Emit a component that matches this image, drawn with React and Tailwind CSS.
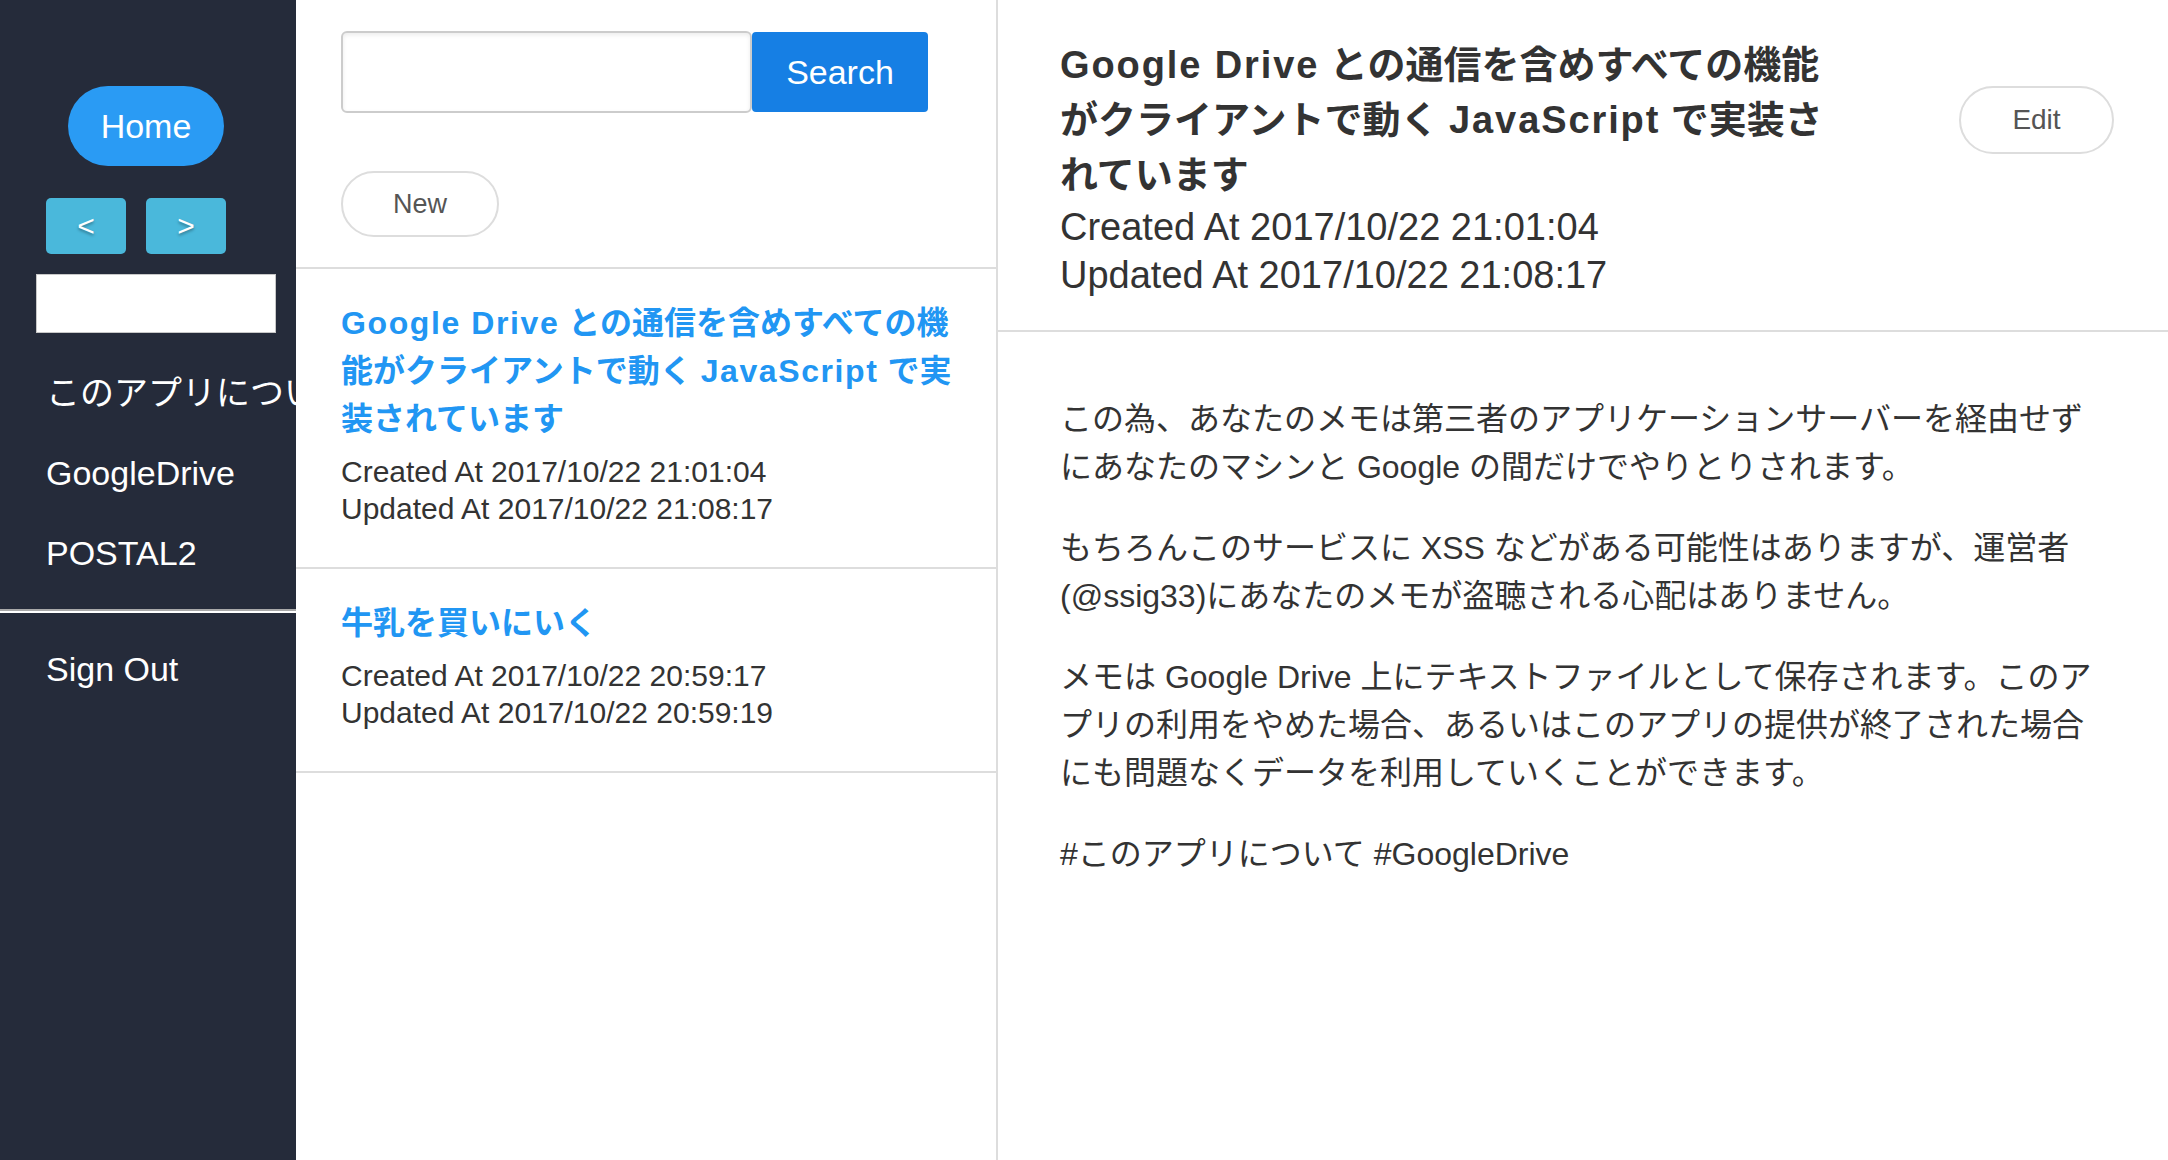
import React from "react";

const FONT = { fontFamily: '"Liberation Sans", "Noto Sans CJK JP", sans-serif' };

function L({ children }) {
  return <span className="tracking-[0.05em]">{children}</span>;
}

function Sidebar() {
  return (
    <aside className="w-[296px] shrink-0 h-full bg-[#252b3a] overflow-hidden flex flex-col text-white">
      <button className="ml-[68px] mt-[86px] w-[156px] h-[80px] rounded-full bg-[#2a9bf4] text-white text-[34px] leading-none">
        Home
      </button>
      <div className="ml-[46px] mt-[32px] flex gap-[20px]">
        <button className="w-[80px] h-[56px] rounded-[5px] bg-[#4ab8db] text-white text-[30px] leading-none [text-shadow:0_2px_3px_rgba(0,0,0,0.35)]">
          &lt;
        </button>
        <button className="w-[80px] h-[56px] rounded-[5px] bg-[#4ab8db] text-white text-[30px] leading-none [text-shadow:0_2px_3px_rgba(0,0,0,0.35)]">
          &gt;
        </button>
      </div>
      <input
        className="ml-[36px] mt-[20px] w-[240px] h-[59px] bg-white border border-[#c8c8c8] outline-none"
        type="text"
      />
      <nav className="mt-[20px] flex flex-col">
        {["このアプリについて", "GoogleDrive", "POSTAL2"].map((t) => (
          <a key={t} className="h-[80px] pl-[46px] flex items-center whitespace-nowrap text-[34px]">
            {t}
          </a>
        ))}
      </nav>
      <div className="mt-[16px] h-[4px] border-t-2 border-[#a9a9a9] border-b-2 border-b-white" />
      <a className="mt-[16px] h-[80px] pl-[46px] flex items-center whitespace-nowrap text-[34px]">Sign Out</a>
    </aside>
  );
}

function ListItem({ lines, created, updated }) {
  return (
    <div className="pl-[45px] pr-[20px] pt-[30px] pb-[40px] border-b-2 border-[#dddddd]">
      <div className="text-[32px] leading-[48px] font-bold text-[#2196f3] whitespace-nowrap">
        {lines.map((l, i) => (
          <div key={i}>{l}</div>
        ))}
      </div>
      <div className="mt-[10px] text-[30px] leading-[37px] text-[#333333] whitespace-nowrap">
        <div>Created At {created}</div>
        <div>Updated At {updated}</div>
      </div>
    </div>
  );
}

function ListPanel() {
  return (
    <section className="w-[702px] shrink-0 h-full bg-white border-r-2 border-[#dddddd] flex flex-col">
      <div className="pl-[45px] pt-[31px] pb-[30px] border-b-2 border-[#dddddd]">
        <div className="flex items-center">
          <input
            type="text"
            className="w-[411px] h-[82px] rounded-[6px] border-2 border-[#cccccc] bg-white outline-none shadow-[inset_0_2px_4px_rgba(0,0,0,0.08)]"
          />
          <button className="w-[176px] h-[80px] rounded-[4px] bg-[#167fe4] text-white text-[34px] leading-none">
            Search
          </button>
        </div>
        <button className="mt-[58px] w-[158px] h-[66px] rounded-full border-2 border-[#dddddd] bg-white text-[#555555] text-[27px] leading-none">
          New
        </button>
      </div>
      <ListItem
        lines={[
          <>
            <L>Google Drive</L> との通信を含めすべての機
          </>,
          <>
            能がクライアントで動く <L>JavaScript</L> で実
          </>,
          "装されています",
        ]}
        created="2017/10/22 21:01:04"
        updated="2017/10/22 21:08:17"
      />
      <ListItem
        lines={["牛乳を買いにいく"]}
        created="2017/10/22 20:59:17"
        updated="2017/10/22 20:59:19"
      />
    </section>
  );
}

function DetailPanel() {
  const paras = [
    [
      "この為、あなたのメモは第三者のアプリケーションサーバーを経由せず",
      "にあなたのマシンと Google の間だけでやりとりされます。",
    ],
    [
      "もちろんこのサービスに XSS などがある可能性はありますが、運営者",
      "(@ssig33)にあなたのメモが盗聴される心配はありません。",
    ],
    [
      "メモは Google Drive 上にテキストファイルとして保存されます。このア",
      "プリの利用をやめた場合、あるいはこのアプリの提供が終了された場合",
      "にも問題なくデータを利用していくことができます。",
    ],
    ["#このアプリについて #GoogleDrive"],
  ];
  return (
    <section className="flex-1 h-full bg-white flex flex-col min-w-0">
      <header className="pl-[62px] pr-[54px] pt-[38px] pb-[31px] border-b-2 border-[#dddddd] flex items-start justify-between">
        <div className="text-[#333333]">
          <h1 className="text-[38px] leading-[55px] font-bold whitespace-nowrap">
            <div>
              <L>Google Drive</L> との通信を含めすべての機能
            </div>
            <div>
              がクライアントで動く <L>JavaScript</L> で実装さ
            </div>
            <div>れています</div>
          </h1>
          <div className="text-[38px] leading-[48px] whitespace-nowrap">
            <div>Created At 2017/10/22 21:01:04</div>
            <div>Updated At 2017/10/22 21:08:17</div>
          </div>
        </div>
        <button className="mt-[48px] w-[155px] h-[68px] rounded-full border-2 border-[#dddddd] bg-white text-[#555555] text-[28px] leading-none">
          Edit
        </button>
      </header>
      <div className="pl-[62px] pt-[63px] flex flex-col gap-[33px] text-[32px] leading-[48px] text-[#333333]">
        {paras.map((p, i) => (
          <p key={i} className="whitespace-nowrap">
            {p.map((l, j) => (
              <span key={j} className="block">
                {l}
              </span>
            ))}
          </p>
        ))}
      </div>
    </section>
  );
}

export default function App() {
  return (
    <div className="w-full h-screen flex overflow-hidden bg-white" style={FONT}>
      <Sidebar />
      <ListPanel />
      <DetailPanel />
    </div>
  );
}
